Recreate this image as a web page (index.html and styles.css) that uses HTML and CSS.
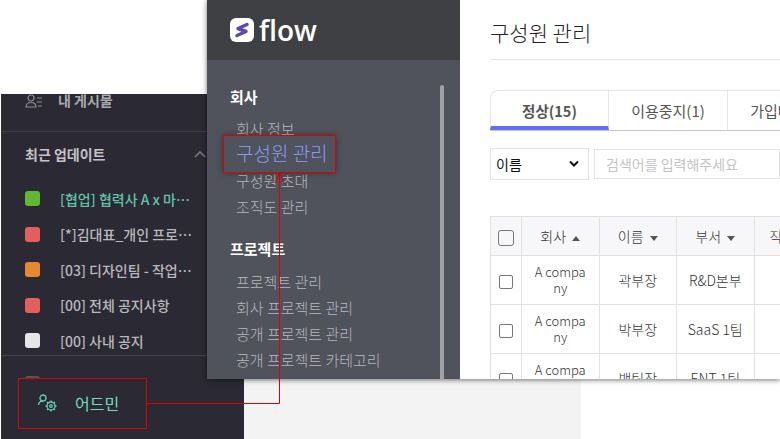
FILE: index.html
```html
<!DOCTYPE html>
<html>
<head>
    <title>플로우 어드민 - 구성원 관리</title>
    <link rel="stylesheet" href="styles.css">
</head>
<body>
    <!-- dark app sidebar, behind the admin window -->
    <div class="backdrop"></div>
    <div class="app-side">
        <div class="my-posts">
            <svg class="posts-icon" width="18" height="14" viewBox="0 0 18 14" fill="none" stroke="#8d8c93" stroke-width="1.2">
                <circle cx="6" cy="4" r="3"/>
                <path d="M1 13c0-3 2-4.500 5-4.500s5 1.500 5 4.500z"/>
                <path d="M12 4h5M12 8h5M13 12h4"/>
            </svg>
            <span>내 게시물</span>
        </div>
        <div class="recent">
            <div class="recent-head">
                <span>최근 업데이트</span>
                <svg width="12" height="8" viewBox="0 0 12 8" fill="none" stroke="#77767c" stroke-width="1.600"><path d="M1 7l5-5 5 5"/></svg>
            </div>
            <ul class="recent-list">
                <li class="on"><i class="dot green"></i><span>[협업] 협력사 A x 마…</span></li>
                <li><i class="dot red"></i><span>[*]김대표_개인 프로…</span></li>
                <li><i class="dot orange"></i><span>[03] 디자인팀 - 작업…</span></li>
                <li><i class="dot red"></i><span>[00] 전체 공지사항</span></li>
                <li><i class="dot white"></i><span>[00] 사내 공지</span></li>
            </ul>
        </div>
        <div class="peek-dot"></div>
        <div class="admin-btn">
            <svg width="21" height="20" viewBox="0 0 21 20" fill="none" stroke="#5fd0b5" stroke-width="1.300">
                <circle cx="6" cy="5" r="3"/>
                <path d="M1.500 12c0-2.500 2-4 4.500-4"/>
                <circle cx="14" cy="13" r="4"/>
                <circle cx="14" cy="13" r="1.300"/>
                <path d="M14 7.500v1.500M14 17v1.500M8.500 13H10M18 13h1.500M10.100 9.100l1.100 1.100M16.800 15.800l1.100 1.100M17.900 9.100l-1.100 1.100M11.200 15.800l-1.100 1.100" stroke-width="1.600"/>
            </svg>
            <span>어드민</span>
        </div>
    </div>

    <!-- admin window -->
    <div class="admin-win">
        <aside class="nav">
            <div class="logo">
                <svg width="24" height="24" viewBox="0 0 24 24">
                    <rect width="24" height="24" rx="6" fill="#fff"/>
                    <path d="M17 6.500L8 10.500 16 13.500 7 17.500" fill="none" stroke="#5d48ae" stroke-width="3.500" stroke-linecap="round" stroke-linejoin="round"/>
                </svg>
                <span>flow</span>
            </div>
            <div class="nav-body">
                <h3>회사</h3>
                <a>회사 정보</a>
                <a class="cur">구성원 관리</a>
                <a>구성원 초대</a>
                <a>조직도 관리</a>
                <h3 class="sec2">프로젝트</h3>
                <a>프로젝트 관리</a>
                <a>회사 프로젝트 관리</a>
                <a>공개 프로젝트 관리</a>
                <a>공개 프로젝트 카테고리</a>
                <div class="scroll-thumb"></div>
            </div>
        </aside>
        <main class="content">
            <h1>구성원 관리</h1>
            <div class="tabs">
                <div class="tab active">정상(15)</div>
                <div class="tab">이용중지(1)</div>
                <div class="tab">가입대기(0)</div>
            </div>
            <div class="search">
                <div class="sel">이름
                    <svg width="12" height="8" viewBox="0 0 12 8" fill="none" stroke="#111" stroke-width="2"><path d="M2 1.500l4 4 4-4"/></svg>
                </div>
                <div class="kw">검색어를 입력해주세요</div>
            </div>
            <table>
                <tr class="hd">
                    <th class="c0"><i class="cb big"></i></th>
                    <th class="c1">회사 <b class="up"></b></th>
                    <th class="c1">이름 <b class="down"></b></th>
                    <th class="c1">부서 <b class="down"></b></th>
                    <th class="c4">직책</th>
                </tr>
                <tr>
                    <td><i class="cb"></i></td>
                    <td class="co">A compa ny</td>
                    <td>곽부장</td>
                    <td>R&amp;D본부</td>
                    <td></td>
                </tr>
                <tr>
                    <td><i class="cb"></i></td>
                    <td class="co">A compa ny</td>
                    <td>박부장</td>
                    <td>SaaS 1팀</td>
                    <td></td>
                </tr>
                <tr>
                    <td><i class="cb"></i></td>
                    <td class="co">A compa ny</td>
                    <td>백팀장</td>
                    <td>ENT 1팀</td>
                    <td></td>
                </tr>
            </table>
        </main>
    </div>

    <!-- annotations drawn over the screenshot -->
    <div class="mark-admin"></div>
    <svg class="arrow" width="780" height="439" viewBox="0 0 780 439" fill="none" stroke="#e00000" stroke-width="1">
        <path d="M147 403.500H279.500V173"/>
        <path d="M275 183l4.500-10 4.500 10"/>
    </svg>
</body>
</html>
```

FILE: styles.css
```css
html, body {
    margin: 0;
    padding: 0;
}
body {
    width: 780px;
    height: 439px;
    overflow: hidden;
    position: relative;
    background: #fff;
    font-family: "Noto Sans CJK KR", "Noto Sans", sans-serif;
    font-size: 14px;
}
ul {
    list-style: none;
    margin: 0;
    padding: 0;
}

.backdrop {
    position: absolute;
    left: 244px;
    top: 379px;
    width: 337px;
    height: 60px;
    background: #f3f3f3;
}

/* app sidebar */
.app-side {
    position: absolute;
    left: 1px;
    top: 94px;
    width: 243px;
    height: 345px;
    background: #2b2933;
    color: #bdbdc0;
}
.my-posts {
    height: 37px;
    display: flex;
    align-items: flex-start;
    padding-left: 24px;
    gap: 15px;
    font-size: 14px;
    font-weight: 700;
    line-height: 12px;
    color: #a9a9ad;
    border-bottom: 1px solid #3e3c46;
}
.recent {
    height: 223px;
    border-bottom: 1px solid #45444c;
}
.recent-head {
    display: flex;
    justify-content: space-between;
    align-items: center;
    padding: 12px 38px 0 24px;
    font-size: 14px;
    font-weight: 700;
    line-height: 20px;
    color: #c4c4c6;
}
.recent-list {
    margin-top: 17px;
}
.recent-list li {
    display: flex;
    align-items: center;
    height: 35.500px;
    padding-left: 24px;
    gap: 20px;
    font-size: 14px;
    font-weight: 500;
    color: #b9b9bc;
}
.recent-list li.on {
    color: #62c2a8;
}
.dot {
    width: 15px;
    height: 15px;
    border-radius: 3px;
}
.dot.green { background: #62b733; }
.dot.red { background: #e35f5f; }
.dot.orange { background: #e5882e; }
.dot.white { background: #e6e6e6; }
.peek-dot {
    position: absolute;
    left: 24px;
    top: 282px;
    width: 15px;
    height: 3px;
    border-radius: 3px 3px 0 0;
    background: #56555c;
}
.admin-btn {
    position: absolute;
    left: 36px;
    top: 298px;
    display: flex;
    align-items: center;
    gap: 17px;
    font-size: 16px;
    line-height: 22px;
    color: #72dcc0;
}

/* admin window */
.admin-win {
    position: absolute;
    left: 207px;
    top: 0;
    width: 573px;
    height: 379px;
    display: flex;
    overflow: hidden;
    background: #fff;
    box-shadow: 0 1px 5px rgba(0, 0, 0, 0.55);
}
.nav {
    width: 253px;
    flex: none;
    background: #50525c;
    color: #b6b7bd;
}
.logo {
    height: 60px;
    background: #3f4044;
    box-sizing: border-box;
    padding: 18px 0 0 23px;
    display: flex;
    gap: 5px;
    align-items: flex-start;
}
.logo span {
    font-family: "Open Sans", sans-serif;
    font-weight: 600;
    font-size: 28px;
    line-height: 24px;
    color: #fff;
}
.nav-body {
    position: relative;
    padding: 26px 0 0 23px;
}
.nav-body h3 {
    margin: 0 0 8px;
    font-size: 15px;
    font-weight: 700;
    line-height: 22px;
    color: #fff;
}
.nav-body h3.sec2 {
    margin: 18px 0 9px;
}
.nav-body a {
    display: block;
    margin-left: 6px;
    font-size: 15px;
    font-weight: 300;
    line-height: 26px;
}
.nav-body a.cur {
    position: relative;
    z-index: 1;
    box-sizing: border-box;
    width: 113px;
    height: 38px;
    margin: -7px 0 -5px -7px;
    padding-left: 12px;
    border: 1px solid #e00000;
    background: #50525c;
    box-shadow: 0 0 6px rgba(0, 0, 0, 0.35);
    font-size: 19px;
    line-height: 34px;
    color: #8c9bf5;
}
.scroll-thumb {
    position: absolute;
    left: 233px;
    top: 25px;
    width: 4px;
    height: 300px;
    border-radius: 2px;
    background: #a3a3a6;
}

.content {
    flex: 1;
    min-width: 0;
    padding-left: 30px;
    color: #222;
}
.content h1 {
    margin: 0;
    height: 59px;
    font-size: 21px;
    font-weight: 300;
    line-height: 64px;
    color: #222;
    border-bottom: 1px solid #e5e5e5;
}
.tabs {
    display: flex;
    margin-top: 30px;
    width: 320px;
    height: 41px;
    box-sizing: border-box;
    border-bottom: 1px solid #c8c8c8;
    color: #555;
}
.tab {
    width: 119px;
    flex: none;
    box-sizing: border-box;
    border-top: 1px solid #e5e5e5;
    border-right: 1px solid #e5e5e5;
    text-align: center;
    font-size: 15px;
    line-height: 39px;
}
.tab.active {
    border-left: 1px solid #e5e5e5;
    border-top-left-radius: 8px;
    border-bottom: 4px solid #5f6ff5;
    font-weight: 700;
    font-size: 14.500px;
    height: 40px;
}
.search {
    display: flex;
    gap: 5px;
    margin-top: 17px;
    height: 32px;
}
.sel {
    width: 99px;
    box-sizing: border-box;
    border: 1px solid #e3e3e3;
    padding: 0 8px 0 5px;
    display: flex;
    justify-content: space-between;
    align-items: center;
    font-size: 14px;
    color: #111;
}
.kw {
    flex: 1;
    margin: 1px 0;
    box-sizing: border-box;
    border: 1px solid #e3e3e3;
    padding-left: 11px;
    font-size: 14px;
    line-height: 28px;
    color: #c4c4c4;
}
table {
    margin-top: 36px;
    border-collapse: collapse;
    table-layout: fixed;
    width: 320px;
    font-size: 14px;
    font-weight: 300;
    color: #333;
}
th, td {
    box-sizing: border-box;
    border: 1px solid #e2e2e2;
    padding: 0;
    text-align: center;
    font-weight: 300;
    height: 49px;
}
tr.hd th {
    height: 39px;
    background: #f7f7fa;
}
.c0 { width: 31px; }
.c1 { width: 77.500px; }
.c4 { width: 56.500px; }
.co {
    padding: 0 12px;
    font-size: 13px;
    line-height: 16px;
    word-break: break-all;
}
.cb {
    display: inline-block;
    vertical-align: middle;
    width: 12px;
    height: 12px;
    border: 1px solid #777;
    border-radius: 2px;
}
.cb.big {
    width: 14px;
    height: 14px;
    border-radius: 3px;
}
.up, .down {
    display: inline-block;
    vertical-align: middle;
    margin-left: 3px;
    border-left: 4px solid transparent;
    border-right: 4px solid transparent;
}
.up { border-bottom: 5px solid #555; }
.down { border-top: 5px solid #555; }

/* annotations */
.mark-admin {
    position: absolute;
    box-sizing: border-box;
    left: 18px;
    top: 378px;
    width: 129px;
    height: 51px;
    border: 1px solid #e00000;
}
.arrow {
    position: absolute;
    left: 0;
    top: 0;
    pointer-events: none;
}
```
